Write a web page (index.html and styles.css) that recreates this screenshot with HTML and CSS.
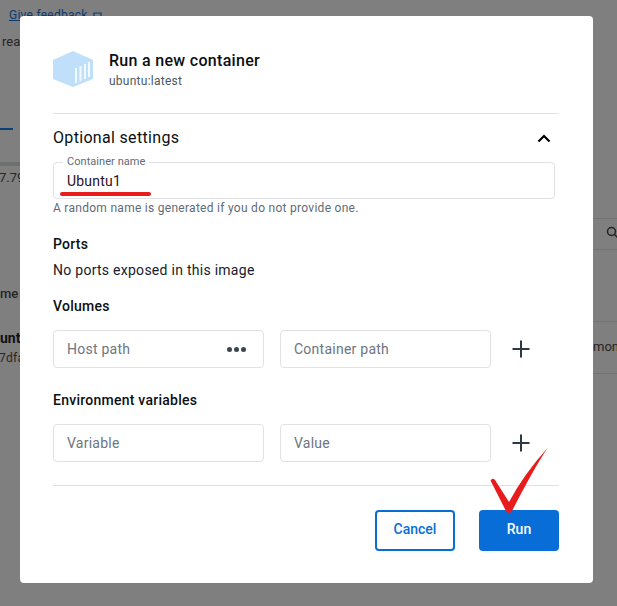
FILE: index.html
```html
<!DOCTYPE html>
<html lang="en">
<head>
<meta charset="utf-8">
<title>Run a new container</title>
<link rel="stylesheet" href="styles.css">
</head>
<body>
<div class="backdrop" aria-hidden="true">
  <a class="bg-link">Give feedback</a>
  <svg class="bg-feedback-icon" viewBox="0 0 10 10"><path d="M1 2h7v5H3L1 9z" fill="none" stroke="#0b3a6e" stroke-width="1.2"/></svg>
  <span class="bg-text bg-read">read</span>
  <span class="bg-tab"></span>
  <span class="bg-band"></span>
  <span class="bg-text bg-size">7.79</span>
  <span class="bg-line bg-line-a"></span>
  <span class="bg-line bg-line-b"></span>
  <span class="bg-line bg-line-c"></span>
  <span class="bg-line bg-line-d"></span>
  <svg class="bg-search" viewBox="0 0 12 12"><circle cx="5.5" cy="5.5" r="4" fill="none" stroke="#222" stroke-width="1.5"/><path d="M8.5 8.5l3 3" stroke="#222" stroke-width="1.5"/></svg>
  <span class="bg-text bg-name">me</span>
  <span class="bg-text bg-unt">unt</span>
  <span class="bg-text bg-hash">7dfa</span>
  <span class="bg-text bg-mon">mon</span>
</div>
<main class="modal">
  <header class="head">
    <svg class="cube" viewBox="0 0 40 36">
      <path d="M20 0L40 9V28L20 36L0 28V9Z" fill="#bfdffa"/>
      <path d="M23 17v15M27.500 15v15M32 13v15M36 11v15" stroke="#f2f9ff" stroke-width="2" fill="none"/>
    </svg>
    <div class="head-text">
      <h1 class="title">Run a new container</h1>
      <p class="subtitle">ubuntu:latest</p>
    </div>
  </header>
  <hr class="rule">
  <div class="optional">
    <h2 class="optional-title">Optional settings</h2>
    <svg class="chevron" viewBox="0 0 14 9"><path d="M1.500 7.500L7 2l5.500 5.500" fill="none" stroke="#000" stroke-width="2.200"/></svg>
  </div>
  <div class="name-field">
    <span class="name-label">Container name</span>
    <span class="name-value">Ubuntu1</span>
    <span class="name-mark"></span>
  </div>
  <p class="hint">A random name is generated if you do not provide one.</p>
  <h3 class="section ports">Ports</h3>
  <p class="plain">No ports exposed in this image</p>
  <h3 class="section volumes">Volumes</h3>
  <div class="row">
    <div class="input"><span>Host path</span><span class="dots"><i></i><i></i><i></i></span></div>
    <div class="input"><span>Container path</span></div>
    <svg class="plus" viewBox="0 0 18 18"><path d="M9 .5v17M.5 9h17" stroke="#2e3944" stroke-width="2" fill="none"/></svg>
  </div>
  <h3 class="section env">Environment variables</h3>
  <div class="row">
    <div class="input"><span>Variable</span></div>
    <div class="input"><span>Value</span></div>
    <svg class="plus" viewBox="0 0 18 18"><path d="M9 .5v17M.5 9h17" stroke="#2e3944" stroke-width="2" fill="none"/></svg>
  </div>
  <hr class="rule rule-foot">
  <footer class="actions">
    <button class="btn btn-cancel">Cancel</button>
    <button class="btn btn-run">Run</button>
  </footer>
  <svg class="check" viewBox="0 0 60 66"><path d="M1.500 33.500Q3.500 30.500 6 33L20 55Q35 27 58.500 1Q44 23 23 64Q20 68 17 64Z" fill="#e81c1c"/></svg>
</main>
</body>
</html>
```
FILE: styles.css
```css
* { box-sizing: border-box; }
html, body { margin: 0; height: 100%; }
body {
  width: 617px;
  height: 606px;
  overflow: hidden;
  position: relative;
  background: #7f7f7f;
  font-family: Roboto, "Liberation Sans", sans-serif;
  color: #0b0f13;
}
.backdrop { position: absolute; inset: 0; }
.backdrop > * { position: absolute; }
.bg-link { left: 9px; top: 7px; font-size: 12px; line-height: 16px; letter-spacing: .25px; color: #0b3a6e; text-decoration: underline; }
.bg-feedback-icon { left: 93px; top: 11px; width: 10px; height: 10px; }
.bg-text { font-size: 13px; line-height: 16px; color: #262626; }
.bg-read { left: 2px; top: 34px; }
.bg-tab { left: 0; top: 128px; width: 13px; height: 2px; background: #0b3f78; }
.bg-band { left: 0; top: 162px; width: 20px; height: 4px; background: #6f6f6f; }
.bg-size { left: -1px; top: 170px; }
.bg-line { left: 593px; width: 24px; height: 1px; background: #737373; }
.bg-line-a { top: 218px; }
.bg-line-b { top: 249px; }
.bg-line-c { top: 321px; }
.bg-line-d { top: 373px; }
.bg-search { left: 606px; top: 226px; width: 12px; height: 12px; }
.bg-name { left: 0; top: 286px; font-weight: 500; }
.bg-unt { left: 0; top: 330px; font-size: 14px; font-weight: 700; color: #111; }
.bg-hash { left: -1px; top: 350px; font-size: 12px; letter-spacing: .3px; }
.bg-mon { left: 593px; top: 339px; font-size: 13px; }

.modal {
  position: absolute;
  left: 20px;
  top: 16px;
  width: 573px;
  height: 567px;
  padding: 35px 34px 32px 33px;
  background: #fff;
  border-radius: 4px;
  display: flex;
  flex-direction: column;
}
.head { display: flex; align-items: center; gap: 16px; height: 36px; }
.cube { width: 40px; height: 36px; flex: none; }
.head-text { display: flex; flex-direction: column; padding-top: 2px; }
.title { margin: 0; font-size: 16px; line-height: 20px; font-weight: 500; letter-spacing: .3px; color: #0b0f13; }
.subtitle { margin: 2px 0 0; font-size: 12px; line-height: 16px; color: #4e5964; letter-spacing: .25px; }
.rule { width: 100%; margin: 26px 0 0; border: 0; border-top: 1px solid #e1e2e6; flex: none; }
.optional { display: flex; justify-content: space-between; align-items: center; height: 48px; padding-right: 8px; flex: none; }
.optional-title { margin: 0; font-size: 16px; line-height: 20px; font-weight: 400; letter-spacing: .32px; }
.chevron { width: 14px; height: 9px; }
.name-field {
  position: relative;
  width: 502px;
  height: 37px;
  border: 1px solid #e1e2e6;
  border-radius: 4px;
  flex: none;
  padding: 9px 13px;
  font-size: 14px;
  line-height: 18px;
}
.name-label {
  position: absolute;
  left: 9px;
  top: -8px;
  padding: 0 4px;
  background: #fff;
  font-size: 11px;
  line-height: 14px;
  color: #5f6b76;
  letter-spacing: .05px;
}
.name-value { color: #2b1020; letter-spacing: .2px; }
.name-mark {
  position: absolute;
  left: 6px;
  top: 29px;
  width: 91px;
  height: 4px;
  border-radius: 2px;
  background: #e81c1c;
}
.hint { margin: 1px 0 0; font-size: 12px; line-height: 16px; color: #5f6b76; letter-spacing: .28px; }
.section { margin: 0; font-size: 14px; line-height: 18px; font-weight: 500; color: #0b0f13; letter-spacing: .25px; }
.ports { margin-top: 19px; }
.plain { margin: 8px 0 0; font-size: 14px; line-height: 18px; color: #17202a; letter-spacing: .27px; }
.volumes { margin-top: 18px; }
.env { margin-top: 23px; }
.row { display: flex; align-items: center; gap: 16px; margin-top: 15px; flex: none; }
.input {
  width: 211px;
  height: 38px;
  display: flex;
  align-items: center;
  justify-content: space-between;
  padding: 0 13px;
  border: 1px solid #e1e2e6;
  border-radius: 4px;
  font-size: 14px;
  color: #6c7680;
  letter-spacing: .25px;
}
.dots { display: flex; gap: 2px; margin-right: 4px; }
.dots i { width: 5px; height: 5px; border-radius: 50%; background: #3c4650; }
.plus { width: 18px; height: 18px; margin-left: 5px; flex: none; }
.rule-foot { margin-top: 23px; }
.actions { display: flex; justify-content: flex-end; gap: 24px; margin-top: 24px; }
.btn {
  width: 80px;
  height: 41px;
  padding: 0 0 3px;
  border-radius: 4px;
  font: 500 14px/18px Roboto, "Liberation Sans", sans-serif;
}
.btn-cancel { background: #fff; border: 2px solid #086dd7; color: #086dd7; }
.btn-run { background: #086dd7; border: 0; color: #fff; }
.check {
  position: absolute;
  left: 469px;
  top: 431px;
  width: 60px;
  height: 66px;
}
```
